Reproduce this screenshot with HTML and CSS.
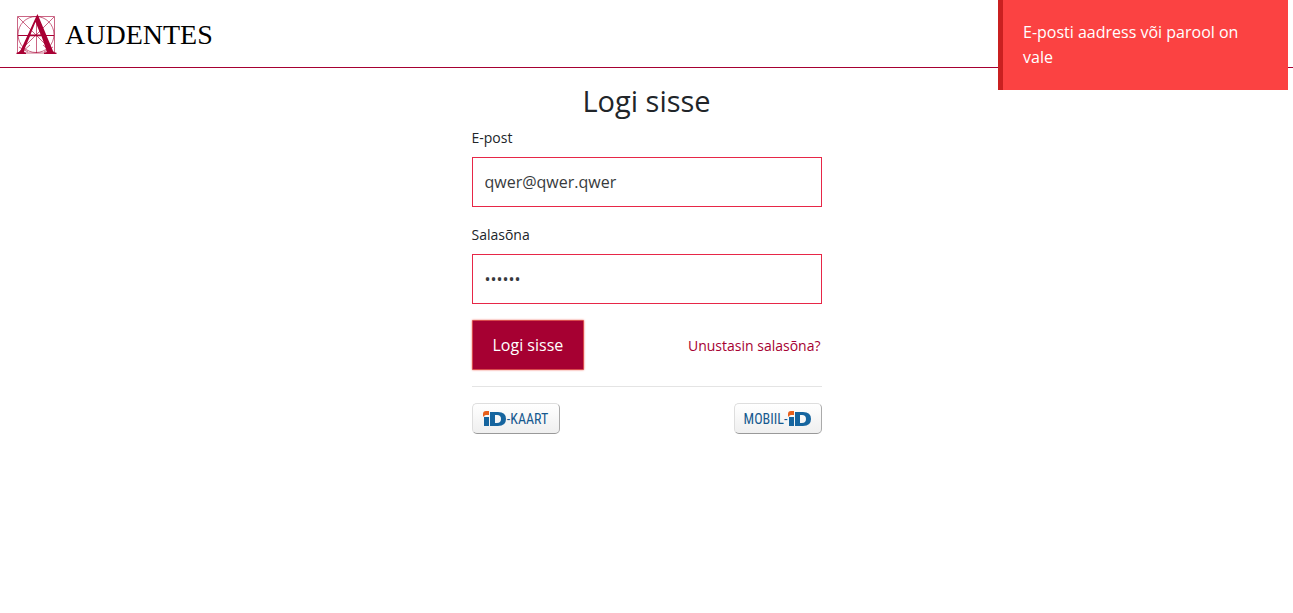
FILE: index.html
```html
<!DOCTYPE html>
<html lang="et">
<head>
<meta charset="utf-8">
<title>Audentes</title>
<link rel="stylesheet" href="styles.css">
</head>
<body>
<header class="header">
  <a class="brand" href="#">
    <svg class="brand-mark" width="42" height="42" viewBox="0 0 42 42" aria-hidden="true">
      <g fill="none" stroke="#a90034" stroke-opacity=".6">
        <path d="M1.5 3.500h37v36.500h-37zM20.500 3v37M2 4l36 36M38 4L2 40" />
        <path stroke-opacity="1" d="M2 22.500h36" />
        <circle cx="20" cy="21.500" r="18" />
        <path d="M12 39l-9-5M28 39l9-5M6 39l8-7M35 39l-8-7" />
      </g>
      <path fill="#a90034" fill-rule="evenodd" d="M21.500 1L37 38q.7 1.700 3.500 1.700v1.300H28v-1.300q3.500 0 2.500-2.200L25.500 23.300H14L8.200 37Q7.500 39.700 10 39.700V41H.5v-1.300q3 0 4.500-3.200L19.500 5zM19.500 9L14.500 21.500H24.600z" />
    </svg>
    <span class="brand-name">AUDENTES</span>
  </a>
</header>
<div class="toast" role="alert">E-posti aadress või parool on vale</div>
<main class="login">
  <h1 class="title">Logi sisse</h1>
  <form class="form">
    <div class="field">
      <label class="label" for="email">E-post</label>
      <input class="input" id="email" type="email" value="qwer@qwer.qwer">
    </div>
    <div class="field">
      <label class="label" for="password">Salasõna</label>
      <input class="input" id="password" type="password" value="qwerty">
    </div>
    <div class="row">
      <button class="submit" type="button">Logi sisse</button>
      <a class="forgot" href="#">Unustasin salasõna?</a>
    </div>
  </form>
  <hr class="divider">
  <div class="row">
    <button class="id-button" type="button" aria-label="ID-kaart">
      <svg class="id-mark" width="23" height="16" viewBox="0 0 23 16" aria-hidden="true">
        <path fill="#16659f" d="M1 6h5v9H1zM7 1h8q8 0 8 7t-8 7H7zM12 4v8h2q4 0 4-4t-4-4z" fill-rule="evenodd" />
        <path fill="#e8601c" d="M0 5V3q0-3 3-3h3v4H3q-2 0-2 2z" />
      </svg>
      <span>-KAART</span>
    </button>
    <button class="id-button" type="button" aria-label="Mobiil-ID">
      <span>MOBIIL-</span>
      <svg class="id-mark" width="23" height="16" viewBox="0 0 23 16" aria-hidden="true">
        <path fill="#16659f" d="M1 6h5v9H1zM7 1h8q8 0 8 7t-8 7H7zM12 4v8h2q4 0 4-4t-4-4z" fill-rule="evenodd" />
        <path fill="#e8601c" d="M0 5V3q0-3 3-3h3v4H3q-2 0-2 2z" />
      </svg>
    </button>
  </div>
</main>
</body>
</html>
```
FILE: styles.css
```css
* {
  box-sizing: border-box;
}

body {
  margin: 0;
  background: #fff;
  color: #212529;
  font: 16px/25px "Open Sans", sans-serif;
}

.header {
  display: flex;
  padding: 13px 16px 12px;
  border-bottom: 1px solid #a60032;
}

.brand {
  display: flex;
  align-items: center;
  gap: 7px;
  color: #000;
  text-decoration: none;
}

.brand-name {
  padding-top: 2px;
  font: 28px/40px "Liberation Serif", serif;
}

.toast {
  position: absolute;
  top: 0;
  right: 5px;
  width: 290px;
  padding: 20px;
  border-left: 5px solid #c92020;
  background: #fb4242;
  color: #fff;
}

.login {
  max-width: 350px;
  margin: 0 auto;
  padding: 16px 0;
}

.title {
  margin: 0 0 8px;
  font-size: 29px;
  line-height: 34px;
  font-weight: 400;
  text-align: center;
}

.field {
  margin-bottom: 16px;
}

.label {
  display: block;
  margin-bottom: 8px;
  font-size: 14px;
  line-height: 23px;
}

.input {
  display: block;
  width: 100%;
  height: 50px;
  padding: 0 12px;
  border: 1px solid #e72747;
  border-radius: 0;
  background: #fff;
  color: #373a3c;
  font: inherit;
  outline: 0;
}

.row {
  display: flex;
  align-items: center;
  justify-content: space-between;
}

.submit {
  height: 50px;
  padding: 0 20px;
  border: 1px solid #d84a4c;
  border-radius: 1px;
  background: #a60032;
  box-shadow: 0 0 2px #ef5b4c;
  color: #fff;
  font: inherit;
}

.forgot {
  padding-right: 1px;
  color: #a60032;
  font-size: 14px;
  text-decoration: none;
}

.divider {
  margin: 16px 0;
  border: 0;
  border-top: 1px solid #e4e4e4;
}

.id-button {
  display: flex;
  align-items: center;
  justify-content: center;
  gap: 1px;
  width: 88px;
  height: 31px;
  padding: 0;
  border: 1px solid #dedede;
  border-right-color: #aaa;
  border-bottom-color: #999;
  border-radius: 5px;
  background: linear-gradient(#fff, #efefef);
  color: #16598f;
  font: 14px/16px "Roboto Condensed", "Open Sans Condensed Light", Lato, sans-serif;
}

.id-mark {
  flex: none;
}
```
